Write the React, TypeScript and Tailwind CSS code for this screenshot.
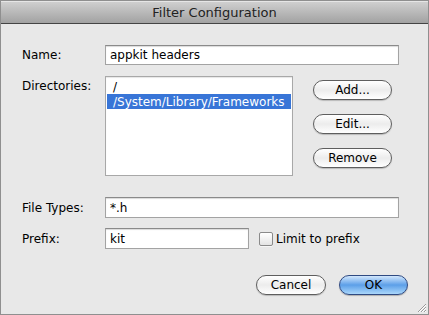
import React from "react";

const font = { fontFamily: '"DejaVu Sans", "Liberation Sans", sans-serif' };

const PillButton = ({ label, primary }: { label: string; primary?: boolean }) => (
  <button
    className={
      primary
        ? "h-[20px] rounded-full border border-[#2f4a82] bg-gradient-to-b from-[#d2e7fc] via-[#5c9fe8] to-[#aad7fb] text-[12px] leading-none text-black shadow-[0_1px_1px_rgba(0,0,0,0.25)]"
        : "h-[20px] rounded-full border border-[#5e5e5e] bg-gradient-to-b from-white via-[#ececec] to-white text-[12px] leading-none text-black shadow-[0_1px_1px_rgba(0,0,0,0.2)]"
    }
  >
    {label}
  </button>
);

const TextField = ({ value, className }: { value: string; className: string }) => (
  <div
    className={
      "flex items-center border border-[#a3a3a3] border-t-[#8a8a8a] bg-white px-[4px] text-[12px] text-black shadow-[inset_0_1px_1px_rgba(0,0,0,0.15)] " +
      className
    }
  >
    {value}
  </div>
);

export default function App() {
  return (
    <div
      className="flex h-[315px] w-[429px] flex-col border border-[#8f8f8f] bg-[#e8e8e8] text-[12px] text-black"
      style={font}
    >
      {/* title bar */}
      <div className="flex h-[23px] shrink-0 items-center justify-center border-b border-[#444444] border-t border-t-[#e6e6e6] bg-gradient-to-b from-[#cfcfcf] to-[#a2a2a2] text-[13px] text-[#222]">
        Filter Configuration
      </div>

      <div className="relative flex flex-1 flex-col pl-[21px] pr-[29px] pt-[21px]">
        {/* Name */}
        <div className="flex items-center">
          <span className="w-[83px]">Name:</span>
          <TextField value="appkit headers" className="h-[20px] flex-1" />
        </div>

        {/* Directories */}
        <div className="mt-[11px] flex">
          <span className="w-[83px] pt-[1px]">Directories:</span>
          <div className="h-[100px] w-[188px] border border-[#a8a8a8] bg-white p-[1px] shadow-[inset_0_1px_1px_rgba(0,0,0,0.1)]">
            <div className="flex h-[16px] items-center px-[6px] pt-[2px]">/</div>
            <div className="flex h-[15px] items-center bg-[#3875d7] px-[6px] text-white">
              /System/Library/Frameworks
            </div>
          </div>
          <div className="ml-[20px] flex w-[79px] flex-col gap-[14px] pt-[4px]">
            <PillButton label="Add..." />
            <PillButton label="Edit..." />
            <PillButton label="Remove" />
          </div>
        </div>

        {/* File types */}
        <div className="mt-[21px] flex items-center">
          <span className="w-[83px]">File Types:</span>
          <TextField value="*.h" className="h-[21px] flex-1" />
        </div>

        {/* Prefix */}
        <div className="mt-[10px] flex items-center">
          <span className="w-[83px]">Prefix:</span>
          <TextField value="kit" className="h-[21px] w-[144px]" />
          <label className="ml-[10px] flex items-center gap-[3px]">
            <span className="h-[14px] w-[14px] rounded-[2px] border border-[#8a8a8a] bg-gradient-to-b from-white to-[#e4e4e4] shadow-[0_1px_0_rgba(255,255,255,0.6)]" />
            <span>Limit to prefix</span>
          </label>
        </div>

        {/* Actions */}
        <div className="mt-[26px] flex justify-end gap-[13px]">
          <div className="flex w-[70px] flex-col">
            <PillButton label="Cancel" />
          </div>
          <div className="mr-[-9px] flex w-[69px] flex-col">
            <PillButton label="OK" primary />
          </div>
        </div>

        {/* resize grip */}
        <svg className="absolute bottom-[1px] right-[1px]" width="11" height="11" viewBox="0 0 11 11">
          <path d="M10 2 L2 10 M10 5 L5 10 M10 8 L8 10" stroke="#9a9a9a" strokeWidth="1" />
          <path d="M10 3 L3 10 M10 6 L6 10 M10 9 L9 10" stroke="#ffffff" strokeWidth="1" />
        </svg>
      </div>
    </div>
  );
}
